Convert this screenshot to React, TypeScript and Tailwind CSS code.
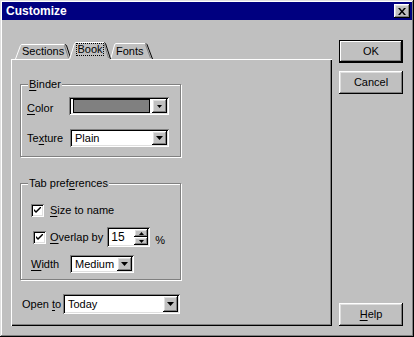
import type { ReactNode } from 'react';

// Win95 style bevels
const RAISED =
  'shadow-[inset_-1px_-1px_0_#000,inset_1px_1px_0_#fff,inset_-2px_-2px_0_#808080,inset_2px_2px_0_#dfdfdf]';
const SUNKEN =
  'shadow-[inset_1px_1px_0_#808080,inset_-1px_-1px_0_#fff,inset_2px_2px_0_#000,inset_-2px_-2px_0_#dfdfdf]';

function U({ children }: { children: ReactNode }) {
  return <span className="underline underline-offset-[2px]">{children}</span>;
}

function Arrow({ small = false }: { small?: boolean }) {
  return small ? (
    <svg width="5" height="3" viewBox="0 0 5 3">
      <path d="M0 0h5L2.5 3z" fill="#000" />
    </svg>
  ) : (
    <svg width="7" height="4" viewBox="0 0 7 4">
      <path d="M0 0h7L3.5 4z" fill="#000" />
    </svg>
  );
}

function Combo({
  width,
  height = 18,
  children,
  smallArrow = false,
  swatch = false,
}: {
  width: number;
  height?: number;
  children?: ReactNode;
  smallArrow?: boolean;
  swatch?: boolean;
}) {
  return (
    <div
      className={`flex items-stretch bg-white p-[2px] ${SUNKEN}`}
      style={{ width, height }}
    >
      <div className="flex flex-1 items-center pl-[2px] pr-[2px] min-w-0">
        {swatch ? (
          <div className="h-full w-full bg-[#808080] border border-black my-[1px]" />
        ) : (
          <span className="pl-[1px]">{children}</span>
        )}
      </div>
      <div className={`flex w-[15px] items-center justify-center bg-[#c0c0c0] ${RAISED}`}>
        <Arrow small={smallArrow} />
      </div>
    </div>
  );
}

function Check() {
  return (
    <div className={`flex h-[13px] w-[13px] items-center justify-center bg-white ${SUNKEN}`}>
      <svg width="7" height="7" viewBox="0 0 7 7">
        <path d="M0 2v2l2 2 5-5V-1L2 4z" fill="#000" />
      </svg>
    </div>
  );
}

function Group({
  label,
  height,
  children,
}: {
  label: ReactNode;
  height: number;
  children: ReactNode;
}) {
  return (
    <div
      className="relative w-[161px] border border-[#808080] shadow-[1px_1px_0_#fff,inset_1px_1px_0_#fff]"
      style={{ height }}
    >
      <span className="absolute left-[7px] top-[-8px] bg-[#c0c0c0] px-[1px] leading-[14px]">
        {label}
      </span>
      {children}
    </div>
  );
}

function Button({ children, isDefault = false }: { children: ReactNode; isDefault?: boolean }) {
  return (
    <div
      className={`flex h-[23px] w-[64px] items-center justify-center bg-[#c0c0c0] ${
        isDefault
          ? 'border border-black shadow-[inset_-1px_-1px_0_#000,inset_1px_1px_0_#fff,inset_-2px_-2px_0_#808080]'
          : RAISED
      }`}
    >
      {children}
    </div>
  );
}

function TabStrip() {
  return (
    <div className="relative h-[17px] w-[321px]">
      <svg
        className="absolute left-0 top-0 overflow-visible"
        width="321"
        height="18"
        viewBox="0 0 321 18"
      >
        {/* Sections */}
        <path d="M4.5 17 L9.5 3.5 Q10 2.5 11 2.5 L53 2.5" fill="none" stroke="#fff" />
        <path d="M54 2.5 L55.5 3.5 L59.5 16" fill="none" stroke="#000" />
        <path d="M53.5 3.5 L57.5 16" fill="none" stroke="#808080" />
        {/* Fonts */}
        <path d="M100 16 L103.5 3 Q104 1.5 105 1.5 L134 1.5" fill="none" stroke="#fff" />
        <path d="M135 1.5 L136 2.5 L141.5 17" fill="none" stroke="#000" />
        <path d="M134.5 2.5 L139.5 16" fill="none" stroke="#808080" />
        {/* Book (selected) */}
        <path d="M58 17 L58 16 L63 1.5 Q63.5 0.5 65 0.5 L93 0.5" fill="#c0c0c0" stroke="none" />
        <path d="M58 18 L63 1.5 Q63.5 0.5 65 0.5 L93 0.5 L94 1 L99.5 18 Z" fill="#c0c0c0" />
        <path d="M58.5 17.5 L63.5 1.5 Q64 0.5 65 0.5 L93 0.5" fill="none" stroke="#fff" />
        <path d="M93.5 0.5 L94.5 1.5 L99.5 17" fill="none" stroke="#000" />
        <path d="M93 1.5 L97.5 16" fill="none" stroke="#808080" />
      </svg>
      <div className="relative flex h-full items-center">
        <span className="ml-[11px] w-[55px] leading-none pt-[1px]">Sections</span>
        <span className="ml-[-1px] mt-[-2px] flex h-[13px] w-[28px] items-center justify-center outline outline-1 outline-dotted outline-black outline-offset-[-1px]">
          Book
        </span>
        <span className="ml-[12px] leading-none pt-[1px]">Fonts</span>
      </div>
    </div>
  );
}

export default function App() {
  return (
    <div
      className="flex h-[337px] w-[414px] flex-col bg-[#c0c0c0] p-[2px] text-[11px] text-black shadow-[inset_-1px_-1px_0_#000,inset_1px_1px_0_#dfdfdf,inset_-2px_-2px_0_#808080,inset_2px_2px_0_#fff]"
      style={{ fontFamily: '"Liberation Sans", Arial, sans-serif' }}
    >
      {/* title bar */}
      <div className="flex h-[18px] items-center justify-between bg-[#000080] pl-[4px] pr-[2px]">
        <span className="text-[12px] font-bold text-white">Customize</span>
        <div className={`flex h-[14px] w-[16px] items-center justify-center bg-[#c0c0c0] ${RAISED}`}>
          <svg width="8" height="7" viewBox="0 0 8 7">
            <path d="M0 0h2l2 2.5L6 0h2L5 3.5 8 7H6L4 4.5 2 7H0l3-3.5z" fill="#000" />
          </svg>
        </div>
      </div>

      <div className="flex items-start pl-[9px]">
        {/* tabs and page */}
        <div className="mt-[22px] flex flex-col">
          <TabStrip />
          <div className="flex h-[267px] w-[321px] flex-col pl-[9px] pt-[25px] shadow-[inset_1px_1px_0_#fff,inset_-1px_-1px_0_#000,inset_-2px_-2px_0_#808080]">
            <Group label={<><U>B</U>inder</>} height={73}>
              <div className="flex flex-col pl-[6px] pt-[12px]">
                <div className="flex h-[18px] items-center">
                  <span className="w-[42px] pt-[4px]"><U>C</U>olor</span>
                  <Combo width={100} smallArrow swatch />
                </div>
                <div className="mt-[14px] flex h-[18px] items-center">
                  <span className="w-[43px]">Te<U>x</U>ture</span>
                  <Combo width={99}>Plain</Combo>
                </div>
              </div>
            </Group>

            <div className="mt-[26px]">
              <Group label={<>Tab pref<U>e</U>rences</>} height={97}>
                <div className="flex flex-col pl-[10px] pt-[20px]">
                  <div className="flex h-[13px] items-center">
                    <Check />
                    <span className="ml-[6px]"><U>S</U>ize to name</span>
                  </div>
                  <div className="mt-[10px] flex h-[20px] items-center pl-[2px]">
                    <Check />
                    <span className="ml-[4px]"><U>O</U>verlap by</span>
                    <div className={`ml-[4px] flex h-[20px] w-[43px] bg-white p-[2px] ${SUNKEN}`}>
                      <span className="flex flex-1 items-center pl-[2px] text-[12px]">15</span>
                      <div className="flex w-[14px] flex-col">
                        <div className={`flex flex-1 items-center justify-center bg-[#c0c0c0] ${RAISED}`}>
                          <svg width="5" height="3" viewBox="0 0 5 3"><path d="M0 3h5L2.5 0z" fill="#000" /></svg>
                        </div>
                        <div className={`flex flex-1 items-center justify-center bg-[#c0c0c0] ${RAISED}`}>
                          <svg width="5" height="3" viewBox="0 0 5 3"><path d="M0 0h5L2.5 3z" fill="#000" /></svg>
                        </div>
                      </div>
                    </div>
                    <span className="ml-[5px] mt-[6px]">%</span>
                  </div>
                  <div className="mt-[8px] flex h-[18px] items-center">
                    <span className="w-[39px]"><U>W</U>idth</span>
                    <Combo width={64}>Medium</Combo>
                  </div>
                </div>
              </Group>
            </div>

            <div className="ml-[2px] mt-[14px] flex h-[20px] items-center">
              <span className="w-[41px]">Open <U>t</U>o</span>
              <Combo width={117} height={20}>Today</Combo>
            </div>
          </div>
        </div>

        {/* buttons */}
        <div className="ml-[7px] mt-[20px] flex h-[286px] flex-col">
          <Button isDefault>OK</Button>
          <div className="mt-[8px]">
            <Button>Cancel</Button>
          </div>
          <div className="mt-auto">
            <Button><span><U>H</U>elp</span></Button>
          </div>
        </div>
      </div>
    </div>
  );
}
